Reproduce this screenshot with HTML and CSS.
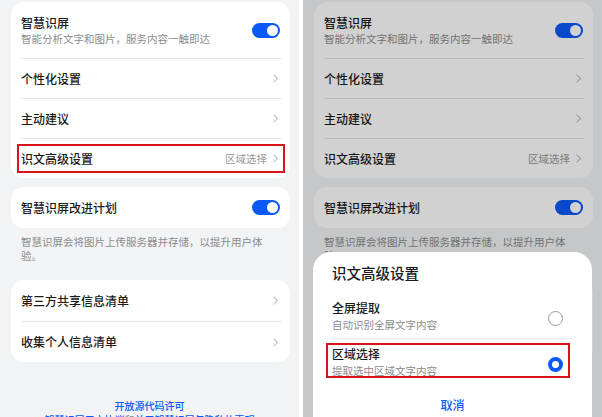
FILE: index.html
```html
<!DOCTYPE html>
<html lang="zh">
<head>
<meta charset="utf-8">
<link rel="stylesheet" href="styles.css">
</head>
<body>
<div class="screens">
  <section class="phone">
    <div class="card">
      <div class="row row-tall">
        <div class="text"><div class="title">智慧识屏</div><div class="sub">智能分析文字和图片，服务内容一触即达</div></div>
        <span class="toggle"></span>
      </div>
      <div class="row"><span class="title">个性化设置</span><svg class="chev" viewBox="0 0 5 9"><polyline points="0.6,0.6 4.4,4.5 0.6,8.4"/></svg></div>
      <div class="row"><span class="title">主动建议</span><svg class="chev" viewBox="0 0 5 9"><polyline points="0.6,0.6 4.4,4.5 0.6,8.4"/></svg></div>
      <div class="row hl"><span class="title">识文高级设置</span><span class="value">区域选择</span><svg class="chev" viewBox="0 0 5 9"><polyline points="0.6,0.6 4.4,4.5 0.6,8.4"/></svg><span class="redbox"></span></div>
    </div>
    <div class="card card-gap">
      <div class="row row-41"><span class="title">智慧识屏改进计划</span><span class="toggle"></span></div>
    </div>
    <p class="note">智慧识屏会将图片上传服务器并存储，以提升用户体验。</p>
    <div class="card card-gap2">
      <div class="row row-41"><span class="title">第三方共享信息清单</span><svg class="chev" viewBox="0 0 5 9"><polyline points="0.6,0.6 4.4,4.5 0.6,8.4"/></svg></div>
      <div class="row row-41"><span class="title">收集个人信息清单</span><svg class="chev" viewBox="0 0 5 9"><polyline points="0.6,0.6 4.4,4.5 0.6,8.4"/></svg></div>
    </div>
    <div class="footer">
      <div class="link">开放源代码许可</div>
      <div class="link2"><span>智慧识屏用户协议</span><span class="and">和</span><span>关于智慧识屏与隐私的声明</span></div>
    </div>
  </section>

  <section class="phone">
    <div class="card">
      <div class="row row-tall">
        <div class="text"><div class="title">智慧识屏</div><div class="sub">智能分析文字和图片，服务内容一触即达</div></div>
        <span class="toggle"></span>
      </div>
      <div class="row"><span class="title">个性化设置</span><svg class="chev" viewBox="0 0 5 9"><polyline points="0.6,0.6 4.4,4.5 0.6,8.4"/></svg></div>
      <div class="row"><span class="title">主动建议</span><svg class="chev" viewBox="0 0 5 9"><polyline points="0.6,0.6 4.4,4.5 0.6,8.4"/></svg></div>
      <div class="row"><span class="title">识文高级设置</span><span class="value">区域选择</span><svg class="chev" viewBox="0 0 5 9"><polyline points="0.6,0.6 4.4,4.5 0.6,8.4"/></svg></div>
    </div>
    <div class="card card-gap">
      <div class="row row-41"><span class="title">智慧识屏改进计划</span><span class="toggle"></span></div>
    </div>
    <p class="note">智慧识屏会将图片上传服务器并存储，以提升用户体验。</p>
    <div class="card card-gap2">
      <div class="row row-41"><span class="title">第三方共享信息清单</span><svg class="chev" viewBox="0 0 5 9"><polyline points="0.6,0.6 4.4,4.5 0.6,8.4"/></svg></div>
      <div class="row row-41"><span class="title">收集个人信息清单</span><svg class="chev" viewBox="0 0 5 9"><polyline points="0.6,0.6 4.4,4.5 0.6,8.4"/></svg></div>
    </div>
    <div class="footer">
      <div class="link">开放源代码许可</div>
      <div class="link2"><span>智慧识屏用户协议</span><span class="and">和</span><span>关于智慧识屏与隐私的声明</span></div>
    </div>
    <div class="overlay"></div>
    <div class="sheet">
      <div class="sheet-title">识文高级设置</div>
      <div class="option">
        <div class="text"><div class="title">全屏提取</div><div class="sub">自动识别全屏文字内容</div></div>
        <span class="radio"></span>
      </div>
      <div class="option sel">
        <div class="text"><div class="title">区域选择</div><div class="sub">提取选中区域文字内容</div></div>
        <span class="radio on"></span>
        <span class="redbox"></span>
      </div>
      <div class="cancel">取消</div>
    </div>
  </section>
</div>
</body>
</html>
```

FILE: styles.css
```css
* { box-sizing: border-box; }
html, body { margin: 0; padding: 0; background: #ffffff; }
body {
  font-family: "Noto Sans CJK SC", "Noto Sans", sans-serif;
  color: #1a1a1a;
}
.screens {
  display: flex;
  gap: 4px;
  width: 602px;
  height: 417px;
}
.phone {
  position: relative;
  width: 299px;
  height: 417px;
  overflow: hidden;
  background: #f1f3f5;
  padding: 2px 9px 0 11px;
}
.card {
  background: #ffffff;
  border-radius: 13px;
}
.card-gap { margin-top: 9px; }
.card-gap2 { margin-top: 17px; }
.row {
  position: relative;
  display: flex;
  align-items: center;
  height: 40px;
  margin: 0 9px 0 10px;
  border-top: 1px solid #e6e6e6;
}
.row:first-child { border-top: none; }
.row-tall { height: 56px; }
.row-41 { height: 41px; }
.text { flex: 1; display: flex; flex-direction: column; }
.title {
  flex: 1;
  font-size: 12px;
  line-height: 16px;
  font-weight: 500;
  color: #1a1a1a;
}
.sub {
  font-size: 10.5px;
  line-height: 15px;
  color: #8c8c8c;
  margin-top: 0;
}
.value {
  font-size: 10.5px;
  color: #979797;
  margin-right: 6px;
}
.chev {
  width: 5px;
  height: 9px;
  margin-right: 3px;
  fill: none;
  stroke: #c2c2c2;
  stroke-width: 1.1;
}
.toggle {
  position: relative;
  width: 28px;
  height: 15px;
  border-radius: 8px;
  background: #0a59f7;
  margin-right: 1px;
}
.toggle::after {
  content: "";
  position: absolute;
  right: 2px;
  top: 2px;
  width: 11px;
  height: 11px;
  border-radius: 50%;
  background: #ffffff;
}
.redbox {
  position: absolute;
  border: 2px solid #d9131c;
  pointer-events: none;
}
.hl .redbox { left: -4px; right: -4px; top: 5px; bottom: 5px; }
.note {
  margin: 7px 10px 0 10px;
  font-size: 10.5px;
  line-height: 14px;
  color: #8c8c8c;
  width: 258px;
}
.footer {
  margin-top: 37px;
  text-align: center;
  font-size: 10px;
  line-height: 13px;
  color: #0a59f7;
  font-weight: 500;
  margin-left: -11px;
  margin-right: -9px;
}
.link2 { margin-top: 1px; }
.link2 .and { color: #8c8c8c; font-weight: 400; }
.overlay {
  position: absolute;
  inset: 0;
  background: rgba(0, 0, 0, 0.18);
}
.sheet {
  position: absolute;
  left: 10px;
  top: 252px;
  width: 279px;
  height: 200px;
  background: #ffffff;
  border-radius: 18px;
  padding: 11px 19px 0 19px;
}
.sheet-title {
  font-size: 14.5px;
  line-height: 20px;
  font-weight: 500;
  color: #1a1a1a;
  margin-bottom: 10px;
}
.option {
  position: relative;
  display: flex;
  align-items: center;
  padding: 7px 10px 4px 0;
  border-bottom: 1px solid #e8e8e8;
}
.option.sel { border-bottom: none; }
.option .title { line-height: 16px; flex: none; }
.option .sub { line-height: 18px; font-size: 10.5px; }
.radio {
  width: 15px;
  height: 15px;
  border-radius: 50%;
  border: 1px solid #9a9a9a;
  margin-top: 2px;
}
.radio.on { border: 4px solid #0a59f7; }
.option .redbox { left: -6px; right: 3px; top: 4px; bottom: 6px; }
.cancel {
  margin-top: 11px;
  text-align: center;
  font-size: 12px;
  line-height: 20px;
  font-weight: 500;
  color: #0a59f7;
}
```
